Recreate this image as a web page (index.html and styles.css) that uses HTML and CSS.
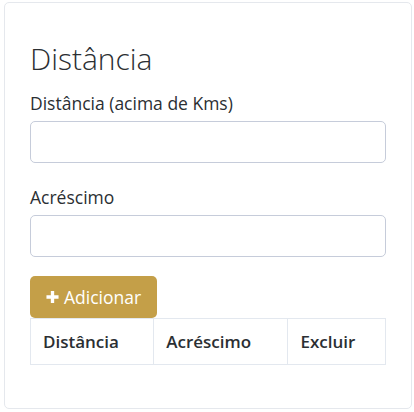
FILE: index.html
```html
<!DOCTYPE html>
<html lang="pt">
<head>
<meta charset="utf-8">
<link rel="stylesheet" href="styles.css">
</head>
<body>
<div class="page">
  <div class="card">
    <h3 class="title">Distância</h3>
    <div class="field">
      <label class="label">Distância (acima de Kms)</label>
      <input class="input" type="text">
    </div>
    <div class="field">
      <label class="label">Acréscimo</label>
      <input class="input" type="text">
    </div>
    <div class="actions">
      <button class="btn" type="button"><svg class="plus" viewBox="0 0 14 14" width="13" height="14"><path d="M5.2 0.5h3.6v4.7h4.7v3.6H8.8v4.7H5.2V8.8H0.5V5.2h4.7z" fill="#fff"/></svg>Adicionar</button>
    </div>
    <table class="table">
      <thead>
        <tr><th>Distância</th><th>Acréscimo</th><th>Excluir</th></tr>
      </thead>
    </table>
  </div>
</div>
</body>
</html>
```
FILE: styles.css
```css
* { box-sizing: border-box; }
html, body { margin: 0; padding: 0; background: #fff; }
body { font-family: "Open Sans", sans-serif; color: #212529; font-size: 16px; line-height: 1.5; }
.page { padding: 2px 2px 3px 4px; }
.card {
  height: 407px;
  border: 1px solid #e5e8ed;
  border-radius: 5px;
  padding: 25px;
  display: flex;
  flex-direction: column;
}
.title {
  margin: 13px 0 14px;
  font-size: 30px;
  font-weight: 300;
  line-height: 36px;
  color: #2b2f33;
}
.field { display: flex; flex-direction: column; }
.label { font-size: 17.5px; line-height: 24px; margin-bottom: 6px; color: #2b2f33; }
.input {
  height: 42px;
  border: 1px solid #c6ccda;
  border-radius: 5px;
  font: inherit;
  padding: 6px 12px;
  margin-bottom: 22px;
}
.actions { display: flex; margin-top: -3px; }
.btn {
  display: flex;
  align-items: center;
  gap: 5px;
  height: 42px;
  padding: 0 16px;
  background: #c49f48;
  border: 0;
  border-radius: 5px;
  color: #fff;
  font-family: "Open Sans", sans-serif;
  font-size: 17.5px;
}
.plus { display: block; }
.table {
  width: 100%;
  border-collapse: collapse;
}
.table th {
  border: 1px solid #e3e8ef;
  text-align: left;
  padding: 11px 12px;
  font-weight: 600;
  font-size: 17px;
  line-height: 23px;
  color: #2b2f33;
}
```
